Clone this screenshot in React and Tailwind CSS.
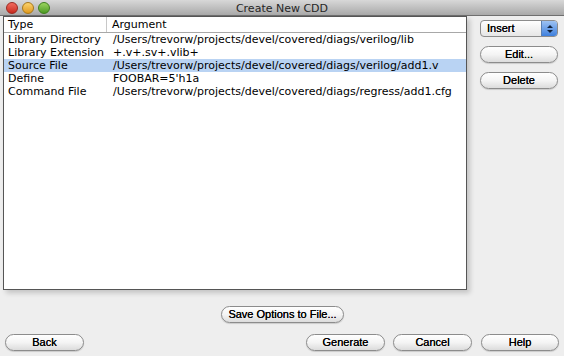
import React from "react";

const rows = [
  ["Library Directory", "/Users/trevorw/projects/devel/covered/diags/verilog/lib"],
  ["Library Extension", "+.v+.sv+.vlib+"],
  ["Source File", "/Users/trevorw/projects/devel/covered/diags/verilog/add1.v"],
  ["Define", "FOOBAR=5'h1a"],
  ["Command File", "/Users/trevorw/projects/devel/covered/diags/regress/add1.cfg"],
];

function Btn({ children, className = "" }) {
  return (
    <div
      className={
        "h-[17px] rounded-full border border-[#8c8c8c] bg-gradient-to-b from-[#ffffff] via-[#f4f4f4] to-[#dcdcdc] flex items-center justify-center text-[11px] text-black leading-none whitespace-nowrap shadow-[0_1px_1px_rgba(0,0,0,0.15)] [text-shadow:0_0_0.4px_#000] " +
        className
      }
      style={{ fontFamily: '"Liberation Sans", Arial, sans-serif' }}
    >
      {children}
    </div>
  );
}

export default function App() {
  return (
    <div
      className="w-[564px] h-[356px] bg-[#eeeeee] flex flex-col overflow-hidden"
      style={{ fontFamily: '"DejaVu Sans", "Liberation Sans", sans-serif' }}
    >
      <div className="h-[16px] shrink-0 bg-gradient-to-b from-[#d8d8d8] to-[#a9a9a9] border-b border-[#6f6f6f] grid grid-cols-[1fr_auto_1fr] items-center">
        <div className="flex items-center gap-[4px] pl-[6px]">
          <div className="w-[12px] h-[12px] rounded-full border border-[#9a2a22] bg-gradient-to-b from-[#f26a5e] to-[#c8281c]" />
          <div className="w-[12px] h-[12px] rounded-full border border-[#a8781a] bg-gradient-to-b from-[#fbd36a] to-[#e09a18]" />
          <div className="w-[12px] h-[12px] rounded-full border border-[#3e7f1c] bg-gradient-to-b from-[#9ad45e] to-[#4c9b22]" />
        </div>
        <div className="text-[11px] text-[#262626] leading-none pt-[1px]">Create New CDD</div>
        <div />
      </div>

      <div className="flex flex-1 min-h-0">
        <div className="ml-[3px] w-[464px] h-[274px] bg-white border border-[#555555] shadow-[3px_3px_5px_rgba(0,0,0,0.18)] flex flex-col text-[11px] text-black leading-none">
          <div className="h-[16px] flex border-b border-[#a8a8a8] shrink-0">
            <div className="w-[103px] border-r border-[#c8c8c8] pl-[4px] flex items-center">Type</div>
            <div className="pl-[5px] flex items-center">Argument</div>
          </div>
          {rows.map(([t, a], i) => (
            <div
              key={i}
              className={
                "h-[13px] flex items-center " + (i === 2 ? "bg-[#b9d3f3]" : "")
              }
            >
              <div className="w-[104px] pl-[4px]">{t}</div>
              <div className="pl-[5px] whitespace-nowrap">{a}</div>
            </div>
          ))}
        </div>

        <div className="ml-[13px] pt-[4px] w-[78px] flex flex-col gap-[9px]">
          <div
            className="h-[17px] rounded-[4px] border border-[#8c8c8c] bg-gradient-to-b from-[#ffffff] to-[#e6e6e6] flex items-center text-[11px] text-black leading-none overflow-hidden [text-shadow:0_0_0.4px_#000]"
            style={{ fontFamily: '"Liberation Sans", Arial, sans-serif' }}
          >
            <div className="flex-1 pl-[6px]">Insert</div>
            <div className="w-[16px] h-full bg-gradient-to-b from-[#9dc2f2] to-[#3d7fdc] flex flex-col items-center justify-center gap-[2px] border-l border-[#5a7fb0]">
              <div className="w-0 h-0 border-l-[3px] border-r-[3px] border-b-[3px] border-l-transparent border-r-transparent border-b-[#10223d]" />
              <div className="w-0 h-0 border-l-[3px] border-r-[3px] border-t-[3px] border-l-transparent border-r-transparent border-t-[#10223d]" />
            </div>
          </div>
          <Btn>Edit...</Btn>
          <Btn>Delete</Btn>
        </div>
      </div>

      <div className="flex justify-center pl-[1px] mb-[11px]">
        <Btn className="w-[123px]">Save Options to File...</Btn>
      </div>

      <div className="flex items-center px-[5px] mb-[5px]">
        <Btn className="w-[79px]">Back</Btn>
        <div className="flex-1" />
        <Btn className="w-[79px]">Generate</Btn>
        <Btn className="w-[79px] ml-[8px]">Cancel</Btn>
        <Btn className="w-[78px] ml-[9px]">Help</Btn>
      </div>
    </div>
  );
}
